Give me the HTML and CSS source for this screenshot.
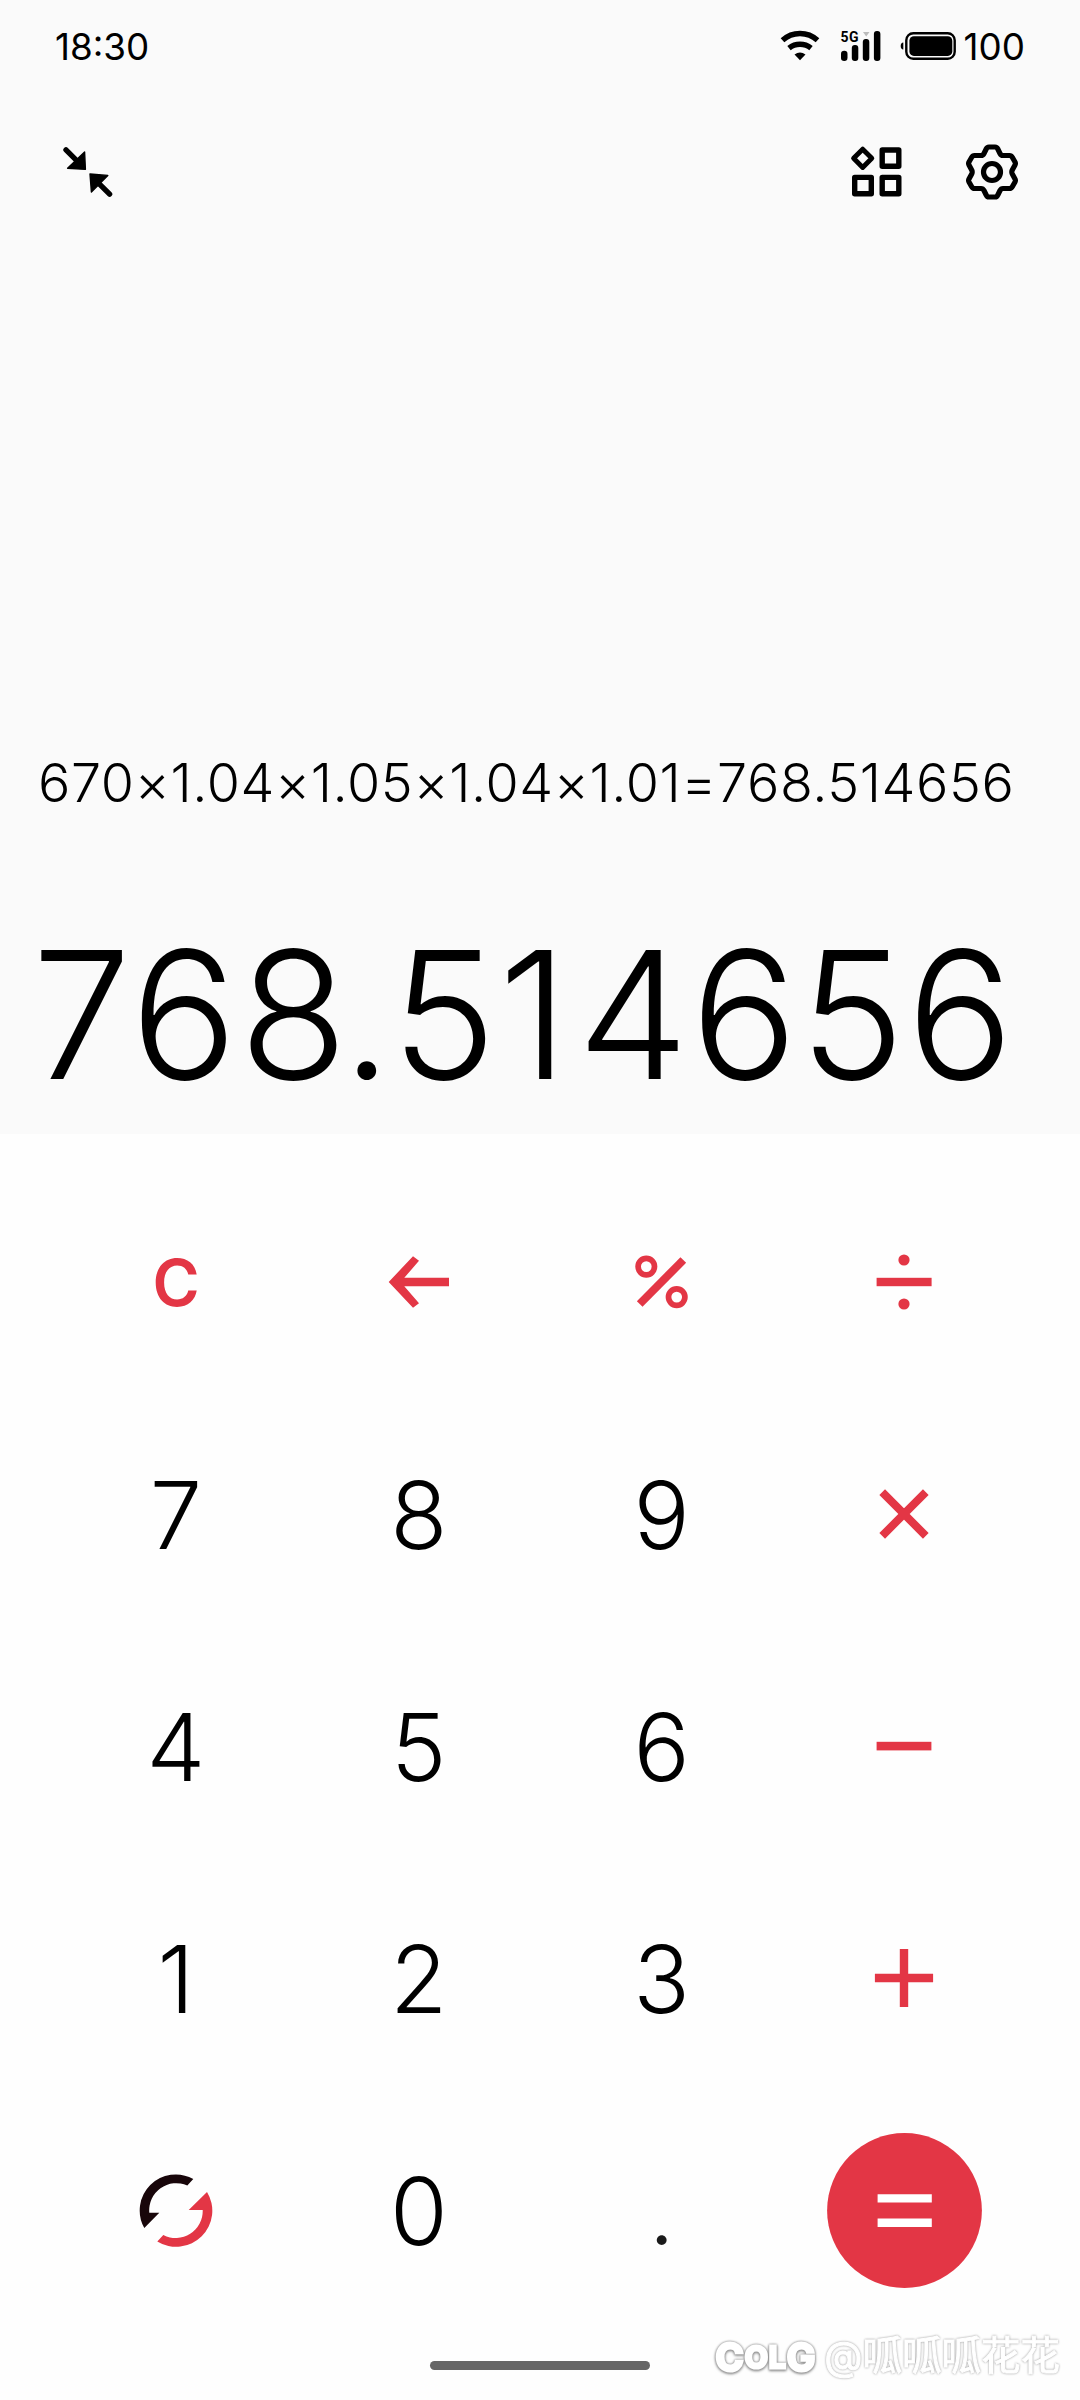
FILE: index.html
```
<!DOCTYPE html>
<html lang="zh-CN">
<head>
    <meta charset="UTF-8">
    <meta name="viewport" content="width=device-width, initial-scale=1.0">
    <title>Calculator</title>
    <link rel="stylesheet" href="styles.css">
</head>
<body>

    <div class="screen">
        <!-- status bar -->
        <div class="status-bar">
            <span class="clock">18:30</span>
            <div class="status-icons">
                <svg class="wifi" width="40" height="32" viewBox="0 0 40 32">
                    <path d="M2.5 10.2A26 26 0 0 1 37.5 10.2M9 18.2A17.5 17.5 0 0 1 31 18.2" fill="none" stroke="#000" stroke-width="5.4"/>
                    <path d="M14.5 24.4Q20 20.4 25.5 24.4L20 30.2Z"/>
                </svg>
                <svg class="signal" width="40" height="32" viewBox="0 0 40 32">
                    <text class="net" x="-0.5" y="12.3" textLength="18">5G</text>
                    <path d="M22 2H28.5L25.2 6.5Z" fill="#bbb"/>
                    <rect x="0" y="20.7" width="6.5" height="10.3" rx="3.2"/>
                    <rect x="10.8" y="15" width="6.5" height="16" rx="3"/>
                    <rect x="21.8" y="9" width="6.5" height="22" rx="3"/>
                    <rect x="32.9" y="1" width="6.5" height="30" rx="3"/>
                </svg>
                <svg class="battery" width="56" height="32" viewBox="0 0 56 32">
                    <path d="M3.3 12.4V19.4Q0.7 19 0.7 15.9T3.3 12.4Z"/>
                    <rect x="6.3" y="3.2" width="48.4" height="25.6" rx="7" fill="none" stroke="#000" stroke-width="2.4"/>
                    <rect x="9.4" y="6.3" width="42.9" height="19.6" rx="4.5"/>
                </svg>
                <span class="level">100</span>
            </div>
        </div>

        <!-- toolbar -->
        <div class="toolbar">
            <svg width="56" height="56" viewBox="60 144 56 56">
                <path d="M66 149.8L78 161.8M109.6 194.2L98 182.6" fill="none" stroke="#000" stroke-width="5.4" stroke-linecap="round"/>
                <path d="M84.6 152L85.4 169.4L67.6 168.3ZM90 174L107.8 175.4L91.4 192Z" stroke="#000" stroke-width="1.4" stroke-linejoin="round"/>
            </svg>
            <div class="tools">
                <svg width="56" height="56" viewBox="848 144 56 56" fill="none" stroke="#000" stroke-width="5.4" stroke-linejoin="round">
                    <path d="M862.7 149.2L871.8 158.3L862.7 167.4L853.6 158.3Z" stroke-width="4.9"/>
                    <rect x="882.2" y="150" width="16.6" height="16.2"/>
                    <rect x="854.7" y="177.4" width="16.6" height="16.4"/>
                    <rect x="882.2" y="177.4" width="16.6" height="16.4"/>
                </svg>
                <svg width="60" height="60" viewBox="0 0 60 60" fill="none" stroke="#000" stroke-width="5.2" stroke-linejoin="round">
                    <circle cx="30" cy="30" r="8.5"/>
                    <path d="M27 5H33Q35 5 35.8 7L38 11.5Q39 13.5 41 13.5H47.5Q49.3 13.5 50.3 15.3L53 20Q53.8 21.5 53 23L50.3 28Q49.3 30 50.3 32L53 37Q53.8 38.5 53 40L50.3 44.7Q49.3 46.5 47.5 46.5H41Q39 46.5 38 48.5L35.8 53Q35 55 33 55H27Q25 55 24.2 53L22 48.5Q21 46.5 19 46.5H12.5Q10.7 46.5 9.7 44.7L7 40Q6.2 38.5 7 37L9.7 32Q10.7 30 9.7 28L7 23Q6.2 21.5 7 20L9.7 15.3Q10.7 13.5 12.5 13.5H19Q21 13.5 22 11.5L24.2 7Q25 5 27 5Z"/>
                </svg>
            </div>
        </div>

        <div class="expression">670×1.04×1.05×1.04×1.01=768.514656</div>
        <div class="result">76<span class="tight">8</span>.5<span class="loose">1</span>4656</div>
    </div>

    <!-- keypad -->
    <div class="keypad">
        <button class="key clear">C</button>
        <button class="key op">
            <svg width="64" height="64" viewBox="0 0 64 64"><path d="M1.7 32L26 6.2L32 10.8L17.3 27.8H62V36.2H17.3L32 53.2L26 57.8Z"/></svg>
        </button>
        <button class="key op">
            <svg width="64" height="64" viewBox="0 0 64 64" fill="none" stroke="#e33645">
                <circle cx="16.3" cy="16.6" r="8.2" stroke-width="5.7"/>
                <circle cx="46.7" cy="47.1" r="8.2" stroke-width="5.7"/>
                <path d="M9.7 54L53.3 10" stroke-width="8"/>
            </svg>
        </button>
        <button class="key op">
            <svg width="64" height="64" viewBox="0 0 64 64"><rect x="4.6" y="27.8" width="55" height="8.4"/><circle cx="32" cy="10" r="5.6"/><circle cx="32" cy="54" r="5.6"/></svg>
        </button>

        <button class="key">7</button>
        <button class="key">8</button>
        <button class="key">9</button>
        <button class="key op">
            <svg width="64" height="64" viewBox="0 0 64 64"><path d="M10.2 10.2L53.8 53.8M53.8 10.2L10.2 53.8" stroke="#e33645" stroke-width="8"/></svg>
        </button>

        <button class="key">4</button>
        <button class="key">5</button>
        <button class="key">6</button>
        <button class="key op">
            <svg width="64" height="64" viewBox="0 0 64 64"><rect x="4.6" y="27.8" width="54.8" height="8.6"/></svg>
        </button>

        <button class="key">1</button>
        <button class="key">2</button>
        <button class="key">3</button>
        <button class="key op">
            <svg width="64" height="64" viewBox="0 0 64 64"><path d="M2.9 27.8H27.8V2.9H36.2V27.8H61.1V36.2H36.2V61.1H27.8V36.2H2.9Z"/></svg>
        </button>

        <button class="key op">
            <svg width="76" height="76" viewBox="0 0 76 76">
                <path d="M55.3 7A36 36 0 0 0 6.3 56L21.3 40.7H11.3A27 27 0 0 1 49.3 13.6Z" fill="#18060a"/>
                <path d="M19.3 69.4A36 36 0 0 0 69 20L50.7 38H64.7A27 27 0 0 1 25.3 63Z"/>
            </svg>
        </button>
        <button class="key">0</button>
        <button class="key dot">.</button>
        <button class="key op">
            <svg width="155" height="155" viewBox="0 0 155 155"><circle cx="77.5" cy="77.5" r="77.4"/><path d="M50.6 61.2H104.8V69.6H50.6ZM50.6 85.4H104.8V93.9H50.6Z" fill="#fff"/></svg>
        </button>
    </div>

    <div class="home-bar"></div>

    <div class="watermark">
        <span class="brand"><b>C</b><i>O</i><i>L</i><b>G</b></span>
        <span class="author">@呱呱呱花花</span>
    </div>

</body>
</html>
```
FILE: styles.css
```
* {
    box-sizing: border-box;
}
body {
    margin: 0;
    width: 1080px;
    height: 2400px;
    overflow: hidden;
    position: relative;
    background-color: #fefefe;
    color: #000;
    font-family: Inter, "Noto Sans CJK SC", sans-serif;
}
svg {
    display: block;
    flex: none;
}
.screen {
    height: 1134px;
    background-color: #fafafa;
}
.status-bar {
    display: flex;
    justify-content: space-between;
    height: 92px;
    padding: 0 55px 0 55px;
    align-items: center;
    font-size: 36.8px;
}
.clock {
    padding-top: 1px;
}
.status-icons {
    display: flex;
    align-items: center;
}
.signal {
    margin-left: 21px;
    overflow: visible;
}
.net {
    font-family: Roboto, sans-serif;
    font-weight: 700;
    font-size: 14px;
}
.battery {
    margin: 0 8px 0 19px;
}
.toolbar {
    display: flex;
    justify-content: space-between;
    align-items: center;
    height: 160px;
    padding: 0 58px 0 60px;
}
.tools {
    display: flex;
    align-items: center;
    gap: 58px;
}
.expression {
    margin-top: 491px;
    padding-left: 38px;
    height: 80px;
    line-height: 80px;
    font-size: 53.8px;
    font-weight: 300;
    letter-spacing: 0.62px;
    white-space: nowrap;
}
.result {
    margin-top: 82px;
    padding-left: 32px;
    height: 220px;
    line-height: 220px;
    font-size: 177.4px;
    font-weight: 330;
    letter-spacing: 2px;
    white-space: nowrap;
}
/* even out the gaps around the point and the 1 */
.tight {
    letter-spacing: -6px;
}
.loose {
    letter-spacing: 9px;
}
.keypad {
    display: grid;
    grid-template-columns: repeat(4, 242.8px);
    grid-auto-rows: 232px;
    margin-top: 32px;
    padding-left: 54.6px;
}
.key {
    display: flex;
    justify-content: center;
    align-items: center;
    padding: 2px 0 0;
    border: none;
    background: none;
    color: #000;
    font-family: inherit;
    font-size: 93.5px;
    font-weight: 330;
    cursor: pointer;
}
.key.op {
    padding: 0;
    fill: #e33645;
}
.key.clear {
    padding: 0;
    color: #e33645;
    font-size: 64px;
    font-weight: 600;
}
.key.dot {
    padding: 0;
    color: #1a1a1a;
}
.home-bar {
    width: 220px;
    height: 9px;
    margin: 35px auto 0;
    border-radius: 4.5px;
    background-color: #666;
}
/* stamped over the bottom right corner */
.watermark {
    position: absolute;
    right: 20px;
    bottom: 18px;
    display: flex;
    align-items: center;
    gap: 9px;
    height: 60px;
    color: #fff;
}
.brand {
    display: flex;
    align-items: center;
    gap: 1px;
    font-size: 38px;
    padding-top: 10px;
    -webkit-text-stroke: 3px #fff;
    filter: drop-shadow(0 0 1px #999) drop-shadow(0 1px 1px #888);
}
.brand b {
    font-weight: 700;
}
.brand i {
    font-style: normal;
    font-weight: 700;
    font-size: 30px;
}
.author {
    font-size: 39.5px;
    -webkit-text-stroke: 1px #fff;
    filter: drop-shadow(0 0 1px #999);
}
```
